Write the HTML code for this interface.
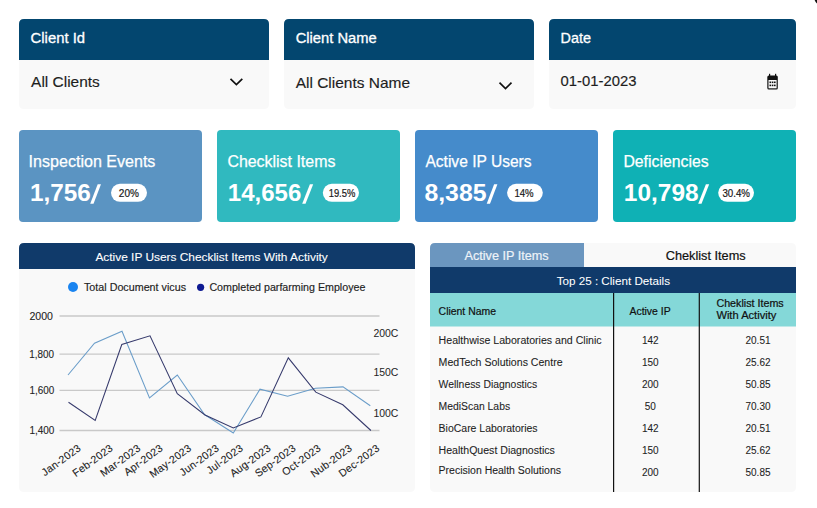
<!DOCTYPE html>
<html><head><meta charset="utf-8"><style>
html,body{margin:0;padding:0;background:#fff;width:817px;height:508px;overflow:hidden}
svg{display:block}
text{font-family:"Liberation Sans", sans-serif}
</style></head><body>
<svg width="817" height="508" viewBox="0 0 817 508">
<path d="M24,19 H264 Q269,19 269,24 V104 Q269,109 264,109 H24 Q19,109 19,104 V24 Q19,19 24,19 Z" fill="#f9f9f9"/>
<path d="M19,60 V24 Q19,19 24,19 H264 Q269,19 269,24 V60 Z" fill="#03466f"/>
<path d="M289,19 H529 Q534,19 534,24 V104 Q534,109 529,109 H289 Q284,109 284,104 V24 Q284,19 289,19 Z" fill="#f9f9f9"/>
<path d="M284,60 V24 Q284,19 289,19 H529 Q534,19 534,24 V60 Z" fill="#03466f"/>
<path d="M554,19 H791 Q796,19 796,24 V104 Q796,109 791,109 H554 Q549,109 549,104 V24 Q549,19 554,19 Z" fill="#f9f9f9"/>
<path d="M549,60 V24 Q549,19 554,19 H791 Q796,19 796,24 V60 Z" fill="#03466f"/>
<text x="30.6" y="42.7" font-size="14" font-weight="400" fill="#fff" text-anchor="start" textLength="54.4" lengthAdjust="spacingAndGlyphs" stroke="#fff" stroke-width="0.3" >Client Id</text>
<text x="295.7" y="42.7" font-size="14" font-weight="400" fill="#fff" text-anchor="start" textLength="81" lengthAdjust="spacingAndGlyphs" stroke="#fff" stroke-width="0.3" >Client Name</text>
<text x="560.6" y="42.7" font-size="14" font-weight="400" fill="#fff" text-anchor="start" textLength="30.4" lengthAdjust="spacingAndGlyphs" stroke="#fff" stroke-width="0.3" >Date</text>
<text x="31.1" y="87.3" font-size="14.5" font-weight="400" fill="#1e1e1e" text-anchor="start" textLength="68.7" lengthAdjust="spacingAndGlyphs" stroke="#1e1e1e" stroke-width="0.15" >All Clients</text>
<text x="295.7" y="87.8" font-size="14.5" font-weight="400" fill="#1e1e1e" text-anchor="start" textLength="114.3" lengthAdjust="spacingAndGlyphs" stroke="#1e1e1e" stroke-width="0.15" >All Clients Name</text>
<text x="560.6" y="86.3" font-size="14" font-weight="400" fill="#1e1e1e" text-anchor="start" textLength="75.8" lengthAdjust="spacingAndGlyphs" stroke="#1e1e1e" stroke-width="0.15" >01-01-2023</text>
<path d="M230.5,78.8 L236.4,84.6 L242.3,78.8" fill="none" stroke="#111" stroke-width="1.7"/>
<path d="M499.5,82.7 L505.5,88.6 L511.5,82.7" fill="none" stroke="#111" stroke-width="1.7"/>
<g fill="#111"><rect x="767.3" y="75.6" width="10.5" height="14" rx="1.5"/><rect x="769" y="73.8" width="1.2" height="3"/><rect x="775" y="73.8" width="1.2" height="3"/></g><rect x="768.5" y="80" width="8.1" height="8.3" fill="#fafafa"/><g fill="#111"><rect x="769.5" y="81.5" width="1.6" height="1.6"/><rect x="771.8" y="81.5" width="1.6" height="1.6"/><rect x="774" y="81.5" width="1.6" height="1.6"/><rect x="769.5" y="84.6" width="1.6" height="1.6"/><rect x="771.8" y="84.6" width="1.6" height="1.6"/><rect x="774" y="84.6" width="1.6" height="1.6"/></g>
<path d="M814.6,0 Q815.6,2.6 817,3.6 V0 Z" fill="#111"/>
<rect x="19" y="130" width="183" height="92" fill="#5b94c2" rx="4" />
<text x="28.6" y="167.2" font-size="16" font-weight="400" fill="#fff" text-anchor="start" textLength="126.8" lengthAdjust="spacingAndGlyphs" stroke="#fff" stroke-width="0.25" >Inspection Events</text>
<text id="num19" x="29.9" y="200.8" font-size="24" font-weight="700" fill="#fff" textLength="60.800000000000004" lengthAdjust="spacingAndGlyphs">1,756</text>
<polygon points="90.2,203.7 93.5,203.7 101,184.2 97.7,184.2" fill="#fff"/>
<rect x="111" y="183.8" width="36" height="18" fill="#fff" rx="9" />
<text x="118.86" y="196.8" font-size="10.3" font-weight="400" fill="#1a1a1a" text-anchor="start" textLength="20.08" lengthAdjust="spacingAndGlyphs" stroke="#1a1a1a" stroke-width="0.2" >20%</text>
<rect x="217" y="130" width="183" height="92" fill="#30b9bf" rx="4" />
<text x="227.4" y="167.2" font-size="16" font-weight="400" fill="#fff" text-anchor="start" textLength="108" lengthAdjust="spacingAndGlyphs" stroke="#fff" stroke-width="0.25" >Checklist Items</text>
<text id="num217" x="227.8" y="200.8" font-size="24" font-weight="700" fill="#fff" textLength="73.5" lengthAdjust="spacingAndGlyphs">14,656</text>
<polygon points="302.2,203.7 305.5,203.7 313.2,184.2 309.9,184.2" fill="#fff"/>
<rect x="322.8" y="183.8" width="36.19999999999999" height="18" fill="#fff" rx="9" />
<text x="328.66" y="196.8" font-size="10.3" font-weight="400" fill="#1a1a1a" text-anchor="start" textLength="26.68" lengthAdjust="spacingAndGlyphs" stroke="#1a1a1a" stroke-width="0.2" >19.5%</text>
<rect x="415" y="130" width="183" height="92" fill="#458bcb" rx="4" />
<text x="425.4" y="167.2" font-size="16" font-weight="400" fill="#fff" text-anchor="start" textLength="106.2" lengthAdjust="spacingAndGlyphs" stroke="#fff" stroke-width="0.25" >Active IP Users</text>
<text id="num415" x="424.4" y="200.8" font-size="24" font-weight="700" fill="#fff" textLength="62.10000000000002" lengthAdjust="spacingAndGlyphs">8,385</text>
<polygon points="486.7,203.7 490.0,203.7 497.4,184.2 494.09999999999997,184.2" fill="#fff"/>
<rect x="507.1" y="183.8" width="35.69999999999993" height="18" fill="#fff" rx="9" />
<text x="514.42" y="196.8" font-size="10.3" font-weight="400" fill="#1a1a1a" text-anchor="start" textLength="19.18" lengthAdjust="spacingAndGlyphs" stroke="#1a1a1a" stroke-width="0.2" >14%</text>
<rect x="613" y="130" width="183" height="92" fill="#0fb1b5" rx="4" />
<text x="623.4" y="167.2" font-size="16" font-weight="400" fill="#fff" text-anchor="start" textLength="85.2" lengthAdjust="spacingAndGlyphs" stroke="#fff" stroke-width="0.25" >Deficiencies</text>
<text id="num613" x="623.8" y="200.8" font-size="24" font-weight="700" fill="#fff" textLength="74.80000000000007" lengthAdjust="spacingAndGlyphs">10,798</text>
<polygon points="698.2,203.7 701.5,203.7 709.2,184.2 705.9000000000001,184.2" fill="#fff"/>
<rect x="718.2" y="183.8" width="35.799999999999955" height="18" fill="#fff" rx="9" />
<text x="722.44" y="196.8" font-size="10.3" font-weight="400" fill="#1a1a1a" text-anchor="start" textLength="27.58" lengthAdjust="spacingAndGlyphs" stroke="#1a1a1a" stroke-width="0.2" >30.4%</text>
<path d="M24,243 H410 Q415,243 415,248 V487 Q415,492 410,492 H24 Q19,492 19,487 V248 Q19,243 24,243 Z" fill="#f9f9f9"/>
<path d="M19,269 V248 Q19,243 24,243 H410 Q415,243 415,248 V269 Z" fill="#103a6a"/>
<text x="95.4" y="260.9" font-size="11" font-weight="400" fill="#fff" text-anchor="start" textLength="232.4" lengthAdjust="spacingAndGlyphs" stroke="#fff" stroke-width="0.1" >Active IP Users Checklist Items With Activity</text>
<circle cx="73" cy="287" r="5" fill="#1a84f0"/>
<text x="84" y="290.8" font-size="10" font-weight="400" fill="#1e1e1e" text-anchor="start" textLength="102" lengthAdjust="spacingAndGlyphs" stroke="#1e1e1e" stroke-width="0.15" >Total Document vicus</text>
<circle cx="200.6" cy="287.3" r="3.6" fill="#0e1a92"/>
<text x="209.4" y="290.8" font-size="10" font-weight="400" fill="#1e1e1e" text-anchor="start" textLength="156" lengthAdjust="spacingAndGlyphs" stroke="#1e1e1e" stroke-width="0.15" >Completed parfarming Employee</text>
<line x1="59.5" x2="379.5" y1="316" y2="316" stroke="#c9c9c9" stroke-width="1.3"/>
<line x1="59.5" x2="379.5" y1="354.2" y2="354.2" stroke="#c9c9c9" stroke-width="1.3"/>
<line x1="59.5" x2="379.5" y1="390.3" y2="390.3" stroke="#c9c9c9" stroke-width="1.3"/>
<line x1="59.5" x2="379.5" y1="430.5" y2="430.5" stroke="#c9c9c9" stroke-width="1.3"/>
<text x="29.5" y="319.8" font-size="10.5" font-weight="400" fill="#1e1e1e" text-anchor="start" textLength="23.5" lengthAdjust="spacingAndGlyphs" stroke="#1e1e1e" stroke-width="0.1" >2000</text>
<text x="29.2" y="358.0" font-size="10.5" font-weight="400" fill="#1e1e1e" text-anchor="start" textLength="24.8" lengthAdjust="spacingAndGlyphs" stroke="#1e1e1e" stroke-width="0.1" >1,800</text>
<text x="29.400000000000002" y="394.1" font-size="10.5" font-weight="400" fill="#1e1e1e" text-anchor="start" textLength="24.8" lengthAdjust="spacingAndGlyphs" stroke="#1e1e1e" stroke-width="0.1" >1,600</text>
<text x="29.4" y="434.3" font-size="10.5" font-weight="400" fill="#1e1e1e" text-anchor="start" textLength="25" lengthAdjust="spacingAndGlyphs" stroke="#1e1e1e" stroke-width="0.1" >1,400</text>
<text x="373.4" y="337.2" font-size="10.5" font-weight="400" fill="#1e1e1e" text-anchor="start" textLength="25" lengthAdjust="spacingAndGlyphs" >200C</text>
<text x="373.4" y="376.3" font-size="10.5" font-weight="400" fill="#1e1e1e" text-anchor="start" textLength="25" lengthAdjust="spacingAndGlyphs" >150C</text>
<text x="373.4" y="417.2" font-size="10.5" font-weight="400" fill="#1e1e1e" text-anchor="start" textLength="25" lengthAdjust="spacingAndGlyphs" >100C</text>
<polyline points="68,375 94.5,343.2 122,331.2 149.5,398 177.3,375 204.5,414.5 233.3,433 260,389.2 287.6,396.3 315.5,388.2 343,386.9 370.3,405.7" fill="none" stroke="#6a9dc9" stroke-width="1.05" stroke-linejoin="miter"/>
<polyline points="68.5,402.2 95.2,420.4 121.8,344.5 150,335.8 177.3,393.7 205,415 233.3,428 260.9,416.9 288.3,357.8 315.8,392.2 342.8,404.8 370.9,430.5" fill="none" stroke="#363a6c" stroke-width="1.05" stroke-linejoin="miter"/>
<text x="0" y="0" font-size="10.6" letter-spacing="0.2" fill="#1e1e1e" stroke="#1e1e1e" stroke-width="0.1" text-anchor="end" transform="translate(81.8,449.6) rotate(-36)">Jan-2023</text>
<text x="0" y="0" font-size="10.6" letter-spacing="0.2" fill="#1e1e1e" stroke="#1e1e1e" stroke-width="0.1" text-anchor="end" transform="translate(113.8,449.6) rotate(-36)">Feb-2023</text>
<text x="0" y="0" font-size="10.6" letter-spacing="0.2" fill="#1e1e1e" stroke="#1e1e1e" stroke-width="0.1" text-anchor="end" transform="translate(141.4,449.6) rotate(-36)">Mar-2023</text>
<text x="0" y="0" font-size="10.6" letter-spacing="0.2" fill="#1e1e1e" stroke="#1e1e1e" stroke-width="0.1" text-anchor="end" transform="translate(163.7,449.6) rotate(-36)">Apr-2023</text>
<text x="0" y="0" font-size="10.6" letter-spacing="0.2" fill="#1e1e1e" stroke="#1e1e1e" stroke-width="0.1" text-anchor="end" transform="translate(192.2,449.6) rotate(-36)">May-2023</text>
<text x="0" y="0" font-size="10.6" letter-spacing="0.2" fill="#1e1e1e" stroke="#1e1e1e" stroke-width="0.1" text-anchor="end" transform="translate(219.9,449.6) rotate(-36)">Jun-2023</text>
<text x="0" y="0" font-size="10.6" letter-spacing="0.2" fill="#1e1e1e" stroke="#1e1e1e" stroke-width="0.1" text-anchor="end" transform="translate(243.9,449.6) rotate(-36)">Jul-2023</text>
<text x="0" y="0" font-size="10.6" letter-spacing="0.2" fill="#1e1e1e" stroke="#1e1e1e" stroke-width="0.1" text-anchor="end" transform="translate(271.6,449.6) rotate(-36)">Aug-2023</text>
<text x="0" y="0" font-size="10.6" letter-spacing="0.2" fill="#1e1e1e" stroke="#1e1e1e" stroke-width="0.1" text-anchor="end" transform="translate(296.6,449.6) rotate(-36)">Sep-2023</text>
<text x="0" y="0" font-size="10.6" letter-spacing="0.2" fill="#1e1e1e" stroke="#1e1e1e" stroke-width="0.1" text-anchor="end" transform="translate(321.8,449.6) rotate(-36)">Oct-2023</text>
<text x="0" y="0" font-size="10.6" letter-spacing="0.2" fill="#1e1e1e" stroke="#1e1e1e" stroke-width="0.1" text-anchor="end" transform="translate(352.9,449.6) rotate(-36)">Nub-2023</text>
<text x="0" y="0" font-size="10.6" letter-spacing="0.2" fill="#1e1e1e" stroke="#1e1e1e" stroke-width="0.1" text-anchor="end" transform="translate(380.4,449.6) rotate(-36)">Dec-2023</text>
<path d="M435,243 H791 Q796,243 796,248 V487 Q796,492 791,492 H435 Q430,492 430,487 V248 Q430,243 435,243 Z" fill="#f9f9f9"/>
<path d="M430,267 V248 Q430,243 435,243 H584 V267 Z" fill="#6b96bf"/>
<rect x="430" y="267" width="366" height="26" fill="#103a6a" rx="0" />
<rect x="430" y="293" width="366" height="33.5" fill="#84d8d8" rx="0" />
<text x="464.5" y="260" font-size="12" font-weight="400" fill="#eef3f8" text-anchor="start" textLength="84.2" lengthAdjust="spacingAndGlyphs" stroke="#eef3f8" stroke-width="0.2" >Active IP Items</text>
<text x="665.7" y="260" font-size="12" font-weight="400" fill="#111" text-anchor="start" textLength="80" lengthAdjust="spacingAndGlyphs" stroke="#111" stroke-width="0.2" >Cheklist Items</text>
<text x="556.7" y="285" font-size="11" font-weight="400" fill="#fff" text-anchor="start" textLength="113.3" lengthAdjust="spacingAndGlyphs" stroke="#fff" stroke-width="0.05" >Top 25 : Client Details</text>
<text x="438.6" y="315.2" font-size="10" font-weight="400" fill="#111" text-anchor="start" textLength="57.4" lengthAdjust="spacingAndGlyphs" stroke="#111" stroke-width="0.2" >Client Name</text>
<text x="629.5" y="314.5" font-size="10" font-weight="400" fill="#111" text-anchor="start" textLength="41.1" lengthAdjust="spacingAndGlyphs" stroke="#111" stroke-width="0.2" >Active IP</text>
<text x="716.4" y="307.1" font-size="10" font-weight="400" fill="#111" text-anchor="start" textLength="67.3" lengthAdjust="spacingAndGlyphs" stroke="#111" stroke-width="0.2" >Cheklist Items</text>
<text x="716.4" y="319.4" font-size="10" font-weight="400" fill="#111" text-anchor="start" textLength="60" lengthAdjust="spacingAndGlyphs" stroke="#111" stroke-width="0.2" >With Activity</text>
<line x1="613.6" x2="613.6" y1="293" y2="492" stroke="#111" stroke-width="1.2"/>
<line x1="699.3" x2="699.3" y1="293" y2="492" stroke="#111" stroke-width="1.2"/>
<text x="438.6" y="344.3" font-size="10" font-weight="400" fill="#1e1e1e" text-anchor="start" textLength="163" lengthAdjust="spacingAndGlyphs" stroke="#1e1e1e" stroke-width="0.08" >Healthwise Laboratories and Clinic</text>
<text x="650.3" y="344.3" font-size="10" font-weight="400" fill="#1e1e1e" text-anchor="middle" stroke="#1e1e1e" stroke-width="0.08" >142</text>
<text x="758" y="344.3" font-size="10" font-weight="400" fill="#1e1e1e" text-anchor="middle" stroke="#1e1e1e" stroke-width="0.08" >20.51</text>
<text x="438.6" y="366.3" font-size="10" font-weight="400" fill="#1e1e1e" text-anchor="start" textLength="124" lengthAdjust="spacingAndGlyphs" stroke="#1e1e1e" stroke-width="0.08" >MedTech Solutions Centre</text>
<text x="650.3" y="366.3" font-size="10" font-weight="400" fill="#1e1e1e" text-anchor="middle" stroke="#1e1e1e" stroke-width="0.08" >150</text>
<text x="758" y="366.3" font-size="10" font-weight="400" fill="#1e1e1e" text-anchor="middle" stroke="#1e1e1e" stroke-width="0.08" >25.62</text>
<text x="438.6" y="388.3" font-size="10" font-weight="400" fill="#1e1e1e" text-anchor="start" textLength="98.6" lengthAdjust="spacingAndGlyphs" stroke="#1e1e1e" stroke-width="0.08" >Wellness Diagnostics</text>
<text x="650.3" y="388.3" font-size="10" font-weight="400" fill="#1e1e1e" text-anchor="middle" stroke="#1e1e1e" stroke-width="0.08" >200</text>
<text x="758" y="388.3" font-size="10" font-weight="400" fill="#1e1e1e" text-anchor="middle" stroke="#1e1e1e" stroke-width="0.08" >50.85</text>
<text x="438.6" y="410.3" font-size="10" font-weight="400" fill="#1e1e1e" text-anchor="start" textLength="71.5" lengthAdjust="spacingAndGlyphs" stroke="#1e1e1e" stroke-width="0.08" >MediScan Labs</text>
<text x="650.3" y="410.3" font-size="10" font-weight="400" fill="#1e1e1e" text-anchor="middle" stroke="#1e1e1e" stroke-width="0.08" >50</text>
<text x="758" y="410.3" font-size="10" font-weight="400" fill="#1e1e1e" text-anchor="middle" stroke="#1e1e1e" stroke-width="0.08" >70.30</text>
<text x="438.6" y="432.3" font-size="10" font-weight="400" fill="#1e1e1e" text-anchor="start" textLength="99" lengthAdjust="spacingAndGlyphs" stroke="#1e1e1e" stroke-width="0.08" >BioCare Laboratories</text>
<text x="650.3" y="432.3" font-size="10" font-weight="400" fill="#1e1e1e" text-anchor="middle" stroke="#1e1e1e" stroke-width="0.08" >142</text>
<text x="758" y="432.3" font-size="10" font-weight="400" fill="#1e1e1e" text-anchor="middle" stroke="#1e1e1e" stroke-width="0.08" >20.51</text>
<text x="438.6" y="454.3" font-size="10" font-weight="400" fill="#1e1e1e" text-anchor="start" textLength="116.3" lengthAdjust="spacingAndGlyphs" stroke="#1e1e1e" stroke-width="0.08" >HealthQuest Diagnostics</text>
<text x="650.3" y="454.3" font-size="10" font-weight="400" fill="#1e1e1e" text-anchor="middle" stroke="#1e1e1e" stroke-width="0.08" >150</text>
<text x="758" y="454.3" font-size="10" font-weight="400" fill="#1e1e1e" text-anchor="middle" stroke="#1e1e1e" stroke-width="0.08" >25.62</text>
<text x="438.6" y="474.1" font-size="10" font-weight="400" fill="#1e1e1e" text-anchor="start" textLength="122.4" lengthAdjust="spacingAndGlyphs" stroke="#1e1e1e" stroke-width="0.08" >Precision Health Solutions</text>
<text x="650.3" y="476.3" font-size="10" font-weight="400" fill="#1e1e1e" text-anchor="middle" stroke="#1e1e1e" stroke-width="0.08" >200</text>
<text x="758" y="476.3" font-size="10" font-weight="400" fill="#1e1e1e" text-anchor="middle" stroke="#1e1e1e" stroke-width="0.08" >50.85</text>
</svg>
</body></html>
